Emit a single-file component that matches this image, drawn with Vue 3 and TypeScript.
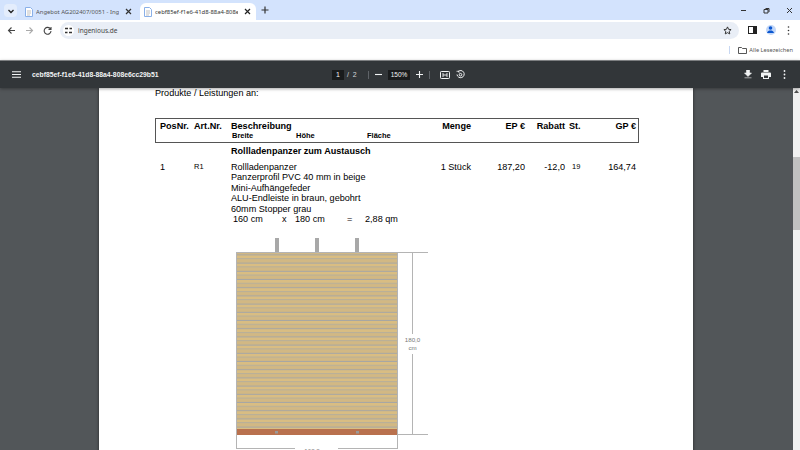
<script setup lang="ts">
const lines: string[] = [
  'Rollladenpanzer',
  'Panzerprofil PVC 40 mm in beige',
  'Mini-Aufhängefeder',
  'ALU-Endleiste in braun, gebohrt',
  '60mm Stopper grau',
]
const hangers: number[] = [39, 79, 119]
</script>

<template>
  <div class="app">
    <div class="tabstrip">
      <span class="tabmenu">
        <svg width="8" height="8" viewBox="0 0 8 8"><path d="M1.500 3 4 5.500 6.500 3" fill="none" stroke="#1f1f1f" stroke-width="1.300" /></svg>
      </span>
      <div class="tab">
        <svg class="docicon" width="8" height="10" viewBox="0 0 8 10"><path d="M.5.5h5l2 2v7h-7z" fill="#fff" stroke="#8ab0e8" /><path d="M2 4h4M2 6h4M2 8h3" stroke="#a8a8a8" stroke-width=".7" /></svg>
        <span class="tabtitle">Angebot AG202407/0051 - Ingenious</span>
        <svg class="tabclose" width="7" height="7" viewBox="0 0 7 7"><path d="M1 1l5 5M6 1 1 6" stroke="#333" stroke-width="1.200" /></svg>
      </div>
      <div class="tab active">
        <svg class="docicon" width="8" height="10" viewBox="0 0 8 10"><path d="M.5.5h5l2 2v7h-7z" fill="#fff" stroke="#8ab0e8" /><path d="M2 4h4M2 6h4M2 8h3" stroke="#a8a8a8" stroke-width=".7" /></svg>
        <span class="tabtitle">cebf85ef-f1e6-41d8-88a4-808e6cc29b51</span>
        <svg class="tabclose" width="7" height="7" viewBox="0 0 7 7"><path d="M1 1l5 5M6 1 1 6" stroke="#222" stroke-width="1.200" /></svg>
      </div>
      <svg class="newtab" width="8" height="8" viewBox="0 0 8 8"><path d="M4 .5v7M.5 4h7" stroke="#333" stroke-width="1.200" /></svg>
      <div class="winctl">
        <svg width="7" height="7" viewBox="0 0 7 7"><path d="M1 3.500h5" stroke="#333" /></svg>
        <svg width="7" height="7" viewBox="0 0 7 7"><path d="M2.500 1.500h3.500v3.500M1 2.500h4v3.500H1z" fill="none" stroke="#333" /></svg>
        <svg width="7" height="7" viewBox="0 0 7 7"><path d="M1 1l5 5M6 1 1 6" stroke="#333" /></svg>
      </div>
    </div>

    <div class="toolbar">
      <svg class="navicon" width="9" height="9" viewBox="0 0 9 9"><path d="M8 4.500H1.500M4.500 1.500l-3 3 3 3" fill="none" stroke="#444" stroke-width="1.100" /></svg>
      <svg class="navicon" width="9" height="9" viewBox="0 0 9 9"><path d="M1 4.500h6.500M4.500 1.500l3 3-3 3" fill="none" stroke="#aaa" stroke-width="1.100" /></svg>
      <svg class="navicon" width="9" height="9" viewBox="0 0 9 9"><path d="M7.500 3A3.400 3.400 0 1 0 8 5M8 1v2.500H5.500" fill="none" stroke="#444" stroke-width="1.100" /></svg>
      <div class="omnibox">
        <span class="tune">
          <svg width="7" height="7" viewBox="0 0 7 7"><path d="M0 1.500h3M4.500 1.500h2.500M0 5.500h2.500M4 5.500h3" stroke="#333" stroke-width="1.600" /></svg>
        </span>
        <span class="url">ingenious.de</span>
        <svg class="star" width="9" height="9" viewBox="0 0 10 10"><path d="M5 1l1.200 2.700 2.800.3-2.100 1.900.6 2.900L5 7.400 2.500 8.800l.6-2.900L1 4l2.800-.3z" fill="none" stroke="#333" stroke-width="1.100" /></svg>
      </div>
      <svg class="sidepanel" width="9" height="8" viewBox="0 0 9 8"><rect x=".5" y=".5" width="8" height="7" fill="none" stroke="#222" /><rect x="5" y="1" width="3" height="6" fill="#222" /></svg>
      <span class="avatar">
        <svg width="9" height="9" viewBox="0 0 9 9"><circle cx="4.500" cy="3" r="1.800" fill="#0b57d0" /><path d="M1 8c.5-2 2-2.500 3.500-2.500S7.500 6 8 8z" fill="#0b57d0" /></svg>
      </span>
      <svg class="kebab" width="3" height="9" viewBox="0 0 3 9"><circle cx="1.500" cy="1" r=".8" fill="#333" /><circle cx="1.500" cy="4.500" r=".8" fill="#333" /><circle cx="1.500" cy="8" r=".8" fill="#333" /></svg>
    </div>

    <div class="bookmarks">
      <span class="bmsep"></span>
      <svg width="9" height="7" viewBox="0 0 9 7"><path d="M.5.500h3l1 1h4v5h-8z" fill="none" stroke="#444" stroke-width=".9" /></svg>
      <span class="bmtext">Alle Lesezeichen</span>
    </div>

    <div class="pdfbar">
      <svg class="hamburger" width="9" height="7" viewBox="0 0 9 7"><path d="M0 .75h9M0 3.500h9M0 6.250h9" stroke="#f1f3f4" stroke-width="1.100" /></svg>
      <span class="doctitle">cebf85ef-f1e6-41d8-88a4-808e6cc29b51</span>
      <div class="pagectl">
        <span class="pagebox">1</span>
        <span class="pagetotal">/&nbsp;&nbsp;2</span>
        <span class="vsep"></span>
        <svg width="7" height="7" viewBox="0 0 7 7"><path d="M0 3.500h7" stroke="#f1f3f4" stroke-width="1.100" /></svg>
        <span class="zoombox">150%</span>
        <svg class="plus" width="7" height="7" viewBox="0 0 7 7"><path d="M0 3.500h7M3.500 0v7" stroke="#f1f3f4" stroke-width="1.100" /></svg>
        <span class="vsep"></span>
        <svg class="fit" width="10" height="8" viewBox="0 0 10 8"><rect x=".5" y=".5" width="9" height="7" rx=".8" fill="none" stroke="#f1f3f4" /><path d="M3 2v4M7 2v4M3 4h4" stroke="#f1f3f4" stroke-width=".9" /></svg>
        <svg width="9" height="9" viewBox="0 0 9 9"><path d="M2 1.600A3.600 3.600 0 1 1 1 4.500" fill="none" stroke="#f1f3f4" /><circle cx="4.500" cy="4.700" r="1.300" fill="none" stroke="#f1f3f4" /><path d="M.5 1.300h2.500v1.500" fill="none" stroke="#f1f3f4" stroke-width=".8" /></svg>
      </div>
      <div class="pdfright">
        <svg width="8" height="9" viewBox="0 0 8 9"><path d="M2.500 0h3v3H7.500L4 6.500.5 3h2zM.5 7.800h7" fill="#f1f3f4" stroke="#f1f3f4" stroke-width=".6" /></svg>
        <svg width="10" height="9" viewBox="0 0 10 9"><path d="M2.500 0h5v2h-5zM1 2.500h8a1 1 0 0 1 1 1V7H8v2H2V7H0V3.500a1 1 0 0 1 1-1z" fill="#f1f3f4" /><rect x="3" y="5.500" width="4" height="2.500" fill="#323639" /></svg>
        <svg class="pdfkebab" width="3" height="9" viewBox="0 0 3 9"><circle cx="1.500" cy="1" r=".9" fill="#f1f3f4" /><circle cx="1.500" cy="4.500" r=".9" fill="#f1f3f4" /><circle cx="1.500" cy="8" r=".9" fill="#f1f3f4" /></svg>
      </div>
    </div>

    <div class="viewer">
      <div class="canvas">
        <div class="page">
          <p class="intro">Produkte / Leistungen an:</p>

          <div class="tablehead">
            <div class="cols">
              <b>PosNr.</b>
              <b>Art.Nr.</b>
              <div class="desc-head">
                <b>Beschreibung</b>
                <div class="subhead"><span>Breite</span><span>Höhe</span><span>Fläche</span></div>
              </div>
              <b class="right">Menge</b>
              <b class="right">EP €</b>
              <b class="right">Rabatt</b>
              <b class="st">St.</b>
              <b class="right">GP €</b>
            </div>
          </div>

          <h3 class="grouptitle">Rollladenpanzer zum Austausch</h3>

          <div class="cols row">
            <span>1</span>
            <span class="small">R1</span>
            <div class="desc">
              <div v-for="l in lines" :key="l">{{ l }}</div>
              <div class="dims"><span>160 cm</span><span>x</span><span>180 cm</span><span>=</span><span>2,88 qm</span></div>
            </div>
            <span class="right menge">1 Stück</span>
            <span class="right">187,20</span>
            <span class="right">-12,0</span>
            <span class="small stv">19</span>
            <span class="right">164,74</span>
          </div>

          <svg class="drawing" width="210" height="212" viewBox="0 0 210 212">
            <defs>
              <pattern id="slats" x="0" y="1" width="8.200" height="8.200" patternUnits="userSpaceOnUse">
                <rect width="8.200" height="8.200" fill="#d9bd82" />
                <rect y="3" width="8.200" height="1" fill="#aaa9a4" />
                <rect y="4" width="8.200" height="3.200" fill="#d2b883" />
                <rect y="7.200" width="8.200" height="1" fill="#a5a6a6" />
              </pattern>
            </defs>
            <rect v-for="h in hangers" :key="h" :x="h" y="0" width="4" height="14" fill="#a8a8a8" />
            <rect x="0" y="14" width="162" height="177" fill="url(#slats)" />
            <rect x="0" y="191" width="162" height="6" fill="#b9714e" />
            <rect x="39" y="193" width="3" height="2.500" fill="#9a9a9a" />
            <rect x="120" y="193" width="3" height="2.500" fill="#9a9a9a" />
            <g fill="none" stroke="#b4b4b4">
              <path d="M.5 14v197M161.500 14v197" />
              <path d="M0 14.500h192M162 196.500h30" />
              <path d="M176.500 14v82M176.500 116v81" />
              <path d="M0 210.500h59M102 210.500h60" />
            </g>
            <text x="176.500" y="104" class="dimtext">180,0</text>
            <text x="176.500" y="111.500" class="dimtext">cm</text>
            <text x="81" y="215" class="dimtext">160,0 cm</text>
          </svg>
        </div>
      </div>
      <div class="scrollbar">
        <svg class="arrow" width="7" height="7" viewBox="0 0 7 7"><path d="M3.500 2 6 5H1z" fill="#505050" /></svg>
        <span class="thumb"></span>
      </div>
    </div>
  </div>
</template>

<style>
html, body { margin: 0; padding: 0; overflow: hidden; }
</style>

<style scoped>
.app {
  width: 800px;
  height: 450px;
  overflow: hidden;
  display: flex;
  flex-direction: column;
  font-family: "Liberation Sans", Arial, sans-serif;
  background: #fff;
}
svg { display: block; flex: none; }

/* tab strip */
.tabstrip {
  height: 20px;
  flex: none;
  background: #d3e3fd;
  display: flex;
  align-items: flex-end;
  padding-left: 4px;
}
.tabmenu {
  width: 13px;
  height: 13px;
  margin-bottom: 3px;
  border-radius: 4px;
  background: #e4edfc;
  display: flex;
  align-items: center;
  justify-content: center;
}
.tab {
  width: 116px;
  height: 17px;
  margin-left: 4px;
  box-sizing: border-box;
  padding: 0 5px 0 4px;
  display: flex;
  align-items: center;
  gap: 3px;
  font-family: "Noto Sans", sans-serif;
  font-size: 5.900px;
  color: #555;
  border-radius: 6px 6px 0 0;
}
.tab.active { background: #fff; color: #333; margin-left: 3px; width: 116px; }
.tabtitle { flex: 1; overflow: hidden; white-space: nowrap; min-width: 0; }
.tabclose { margin-left: 3px; }
.newtab { margin: 0 0 6px 5px; }
.winctl {
  margin-left: auto;
  margin-bottom: 6px;
  margin-right: 7px;
  display: flex;
  gap: 16px;
}

/* toolbar */
.toolbar {
  height: 20px;
  flex: none;
  display: flex;
  align-items: center;
  padding: 0 9px 0 7px;
  box-sizing: border-box;
}
.navicon { margin-right: 9px; }
.omnibox {
  width: 679px;
  height: 17px;
  margin: 0 0 0 -1px;
  background: #e9eef6;
  border-radius: 9px;
  display: flex;
  align-items: center;
  padding: 0 7px 0 3px;
  box-sizing: border-box;
}
.tune {
  width: 11px;
  height: 11px;
  border-radius: 50%;
  background: #fff;
  display: flex;
  align-items: center;
  justify-content: center;
}
.url {
  margin-left: 4px;
  font-family: "Noto Sans", sans-serif;
  font-size: 6.500px;
  color: #444;
}
.star { margin-left: auto; }
.sidepanel { margin-left: 9px; }
.avatar {
  width: 10px;
  height: 10px;
  margin-left: 9px;
  border-radius: 50%;
  background: #c2d7f8;
  overflow: hidden;
}
.kebab { margin-left: 11px; }

/* bookmarks */
.bookmarks {
  height: 20px;
  flex: none;
  display: flex;
  align-items: center;
  justify-content: flex-end;
  padding-right: 7px;
  box-sizing: border-box;
}
.bmsep {
  width: 1px;
  height: 8px;
  background: #c7d7f2;
  margin-right: 8px;
}
.bmtext {
  margin-left: 2px;
  font-family: "Noto Sans", sans-serif;
  font-size: 5.700px;
  color: #555;
}

/* pdf bar */
.pdfbar {
  height: 28px;
  flex: none;
  box-sizing: border-box;
  border-top: 1px solid #7d7f81;
  background: #323639;
  color: #f1f3f4;
  display: flex;
  align-items: center;
  padding: 0 12px;
  position: relative;
  z-index: 2;
  box-shadow: 0 1px 3px rgba(0, 0, 0, 0.35);
}
.doctitle {
  margin-left: 11px;
  width: 140px;
  font-size: 6.800px;
  font-weight: 700;
  white-space: nowrap;
}
.pagectl {
  margin-left: 160px;
  display: flex;
  align-items: center;
  font-size: 7px;
}
.pagebox {
  width: 12px;
  height: 10px;
  line-height: 10px;
  background: #191b1c;
  text-align: center;
}
.pagetotal { margin-left: 3px; width: 21px; color: #d5d8da; }
.vsep { width: 1px; height: 8px; background: #5f6368; margin: 0 6px 0 0; }
.zoombox {
  width: 22px;
  height: 10px;
  line-height: 10px;
  margin: 0 6px;
  background: #191b1c;
  text-align: center;
  font-size: 6.500px;
}
.plus { margin-right: 6px; }
.fit { margin: 0 6px 0 4px; }
.pdfright {
  margin-left: auto;
  display: flex;
  align-items: center;
  gap: 9px;
  padding-right: 2px;
}
.pdfkebab { margin-left: 3px; }

/* viewer */
.viewer {
  flex: 1;
  min-height: 0;
  display: flex;
}
.canvas {
  flex: 1;
  min-width: 0;
  background: #525659;
  padding-left: 99px;
  overflow: hidden;
}
.page {
  width: 594px;
  height: 500px;
  background: #fff;
  box-sizing: border-box;
  padding: 0 0 0 56px;
  box-shadow: 0 0 3px rgba(0, 0, 0, 0.55);
  color: #000;
  font-size: 9.100px;
  line-height: 10.400px;
}
.intro { margin: 0; padding-top: 0; height: 30px; line-height: 11px; }
.tablehead {
  width: 484px;
  height: 25px;
  box-sizing: border-box;
  border: 1px solid #555;
}
.cols {
  display: grid;
  grid-template-columns: 34px 37px 200px 40px 54px 40px 15px 56px;
  padding: 0 3px 0 5px;
  width: 484px;
  box-sizing: border-box;
}
.tablehead .cols { margin: 2px 0 0 -1px; }
.right { text-align: right; }
.st { padding-left: 4px; }
.subhead {
  display: grid;
  grid-template-columns: 64px 71px auto;
  padding-left: 1px;
  font-size: 7.500px;
  line-height: 9px;
  font-weight: 700;
}
.grouptitle {
  margin: 3px 0 0 76px;
  height: 16px;
  font-size: 9.100px;
  line-height: 11px;
  font-weight: 700;
}
.small { font-size: 7.500px; }
.stv { padding-left: 7px; }
.menge { white-space: nowrap; }
.desc { white-space: nowrap; }
.dims {
  display: grid;
  grid-template-columns: 49px 13px 52px 18px auto;
  padding-left: 2px;
}
.drawing { margin: 14px 0 0 81px; overflow: visible; }
.dimtext {
  font-family: "Liberation Sans", sans-serif;
  font-size: 6.200px;
  fill: #777;
  text-anchor: middle;
}

/* scrollbar */
.scrollbar {
  width: 7px;
  flex: none;
  background: #f1f1f1;
  display: flex;
  flex-direction: column;
}
.arrow { flex: none; }
.thumb {
  display: block;
  height: 73px;
  margin-top: 62px;
  background: #c1c1c1;
}
</style>
